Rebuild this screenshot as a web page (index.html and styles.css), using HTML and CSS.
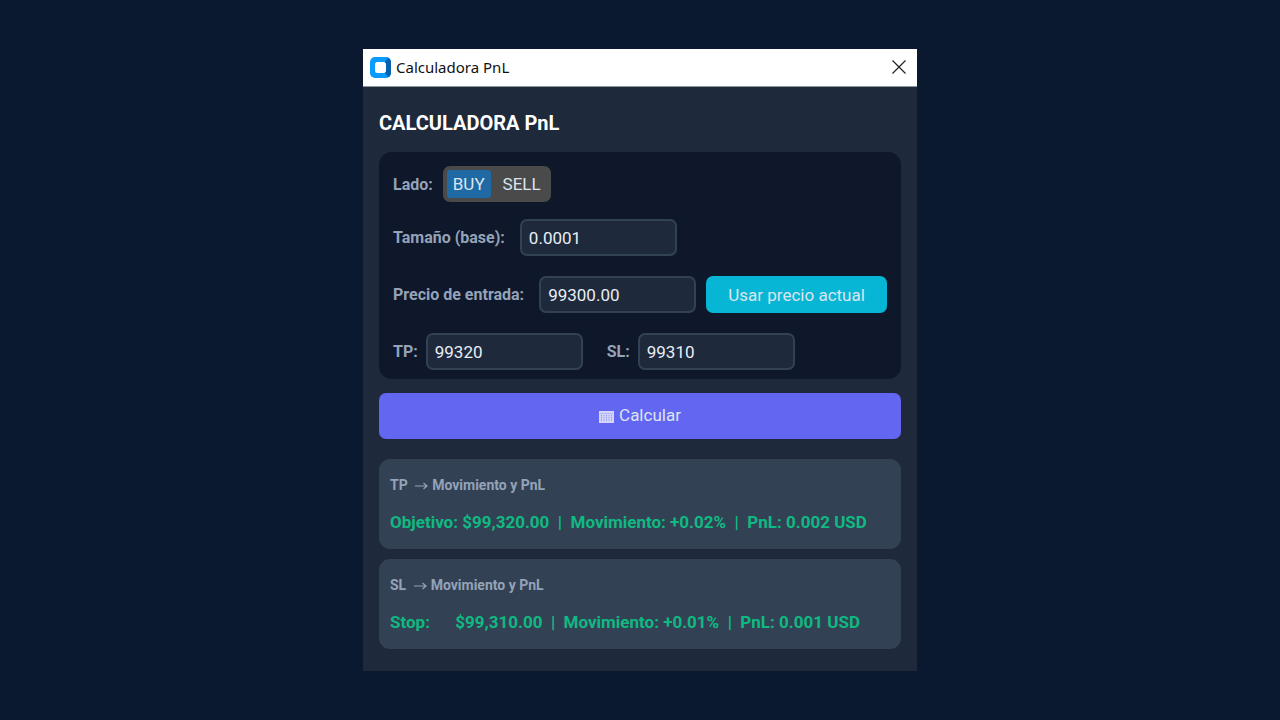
FILE: index.html
```html
<!DOCTYPE html>
<html lang="es">
<head>
    <meta charset="UTF-8">
    <title>Calculadora PnL</title>
    <link rel="stylesheet" href="styles.css">
</head>
<body>
    <div class="window">
        <div class="title-bar">
            <svg class="app-icon" viewBox="0 0 21 21">
                <rect width="21" height="21" rx="5" fill="#0a9bff"/>
                <path d="M15 5l3-4.300A5 5 0 0 1 21 5v11a5 5 0 0 1-3 4.300L15 16z" fill="#0560b0"/>
                <rect x="5" y="5" width="11" height="11" rx="2.500" fill="#fff"/>
            </svg>
            <span class="window-title">Calculadora PnL</span>
            <button class="close-button" type="button" aria-label="Cerrar">
                <svg viewBox="0 0 14 14">
                    <path d="M.5.5l13 13M13.500.5l-13 13" stroke="#222" stroke-width="1.200" fill="none"/>
                </svg>
            </button>
        </div>
        <form class="content" onsubmit="return false">
            <h1>CALCULADORA PnL</h1>
            <div class="card">
                <div class="row side-row">
                    <span class="label" id="sideLabel">Lado:</span>
                    <div class="side-switch" role="radiogroup" aria-labelledby="sideLabel">
                        <label><input type="radio" name="side" value="BUY" checked><span>BUY</span></label>
                        <label><input type="radio" name="side" value="SELL"><span>SELL</span></label>
                    </div>
                </div>
                <div class="row wide-row">
                    <label class="label" for="size">Tamaño (base):</label>
                    <input class="field" type="text" id="size" value="0.0001">
                </div>
                <div class="row wide-row">
                    <label class="label" for="entry">Precio de entrada:</label>
                    <input class="field" type="text" id="entry" value="99300.00">
                    <button class="price-button" type="button">Usar precio actual</button>
                </div>
                <div class="row">
                    <div class="pair">
                        <label class="label" for="tp">TP:</label>
                        <input class="field" type="text" id="tp" value="99320">
                    </div>
                    <div class="pair">
                        <label class="label" for="sl">SL:</label>
                        <input class="field" type="text" id="sl" value="99310">
                    </div>
                </div>
            </div>
            <button class="calc-button" type="submit">
                <svg class="calc-icon" viewBox="0 0 15 12">
                    <rect width="15" height="12" fill="#d3d6f8"/>
                    <path d="M1 2.500h13" stroke="#b4b7f6"/>
                    <path d="M2.500 4v6M5 4v6M7.500 4v6M10 4v6M12.500 4v6" stroke="#8f92f2" stroke-dasharray="1.300 .9"/>
                </svg>
                Calcular
            </button>
            <div class="results">
                <div class="result">
                    <h2>TP <svg class="arrow" viewBox="0 0 13 8"><path d="M0 4h12M8.500 1l3.500 3-3.500 3" fill="none" stroke="currentColor" stroke-width="1.200"/></svg>Movimiento y PnL</h2>
                    <p>Objetivo: $99,320.00  |  Movimiento: +0.02%  |  PnL: 0.002 USD</p>
                </div>
                <div class="result">
                    <h2>SL <svg class="arrow" viewBox="0 0 13 8"><path d="M0 4h12M8.500 1l3.500 3-3.500 3" fill="none" stroke="currentColor" stroke-width="1.200"/></svg>Movimiento y PnL</h2>
                    <p>Stop:      $99,310.00  |  Movimiento: +0.01%  |  PnL: 0.001 USD</p>
                </div>
            </div>
        </form>
    </div>
</body>
</html>
```
FILE: styles.css
```css
* {
    box-sizing: border-box;
}
body {
    font-family: Roboto, sans-serif;
    background-color: #0a192f;
    margin: 0;
    display: flex;
    justify-content: center;
    align-items: center;
    min-height: 100vh;
}
.window {
    width: 100%;
    max-width: 554px;
    background-color: #1e293b;
}
.title-bar {
    display: flex;
    align-items: center;
    background-color: #fff;
    border-bottom: 1px solid #8b959e;
    padding: 7px 11px 8px 7px;
}
.app-icon {
    width: 21px;
    height: 21px;
}
.window-title {
    flex: 1;
    margin-left: 5px;
    font-family: "Noto Sans", "Open Sans", sans-serif;
    font-size: 15px;
    line-height: 22px;
    color: #111;
}
.close-button {
    display: flex;
    background: none;
    border: none;
    padding: 0;
    cursor: pointer;
}
.close-button svg {
    width: 14px;
    height: 14px;
}
.content {
    padding: 24px 16px 22px;
}
h1 {
    margin: 0 0 17px;
    font-size: 20px;
    line-height: 24px;
    color: #fff;
}
.card {
    display: flex;
    flex-direction: column;
    gap: 20px;
    background-color: #0f172a;
    border-radius: 13px;
    padding: 14px 14px 9px;
}
.row, .pair {
    display: flex;
    align-items: center;
    gap: 10px;
}
.row .pair {
    gap: 8px;
}
.pair + .pair {
    margin-left: 14px;
}
.side-row {
    margin-bottom: -3px;
}
.label {
    font-size: 16px;
    font-weight: bold;
    color: #94a3b8;
}
.wide-row .label {
    margin-right: 5px;
}
.side-switch {
    display: flex;
    background-color: #4a4a4a;
    border-radius: 7px;
    padding: 4px;
}
.side-switch input {
    position: absolute;
    opacity: 0;
    margin: 0;
}
.side-switch span {
    display: block;
    padding: 0 6px;
    border-radius: 3px;
    font-size: 17px;
    line-height: 28px;
    color: #dce4ee;
}
.side-switch label + label {
    margin-left: 6px;
}
.side-switch input:checked + span {
    background-color: #1f6aa5;
}
.field {
    width: 157px;
    height: 37px;
    background-color: #1e293b;
    border: 2px solid #334155;
    border-radius: 7px;
    padding: 0 7px;
    font-family: inherit;
    font-size: 17px;
    color: #e8eef5;
}
.price-button {
    flex: 1;
    height: 37px;
    background-color: #06b6d4;
    border: none;
    border-radius: 7px;
    font-family: inherit;
    font-size: 17px;
    color: #dce4ee;
    cursor: pointer;
}
.calc-button {
    display: flex;
    justify-content: center;
    align-items: center;
    gap: 5px;
    width: 100%;
    height: 46px;
    margin: 14px 0 20px;
    padding: 0 0 2px;
    background-color: #6366f1;
    border: none;
    border-radius: 7px;
    font-family: inherit;
    font-size: 17px;
    color: #dce4ee;
    cursor: pointer;
}
.calc-icon {
    width: 15px;
    height: 12px;
    margin-top: 4px;
}
.results {
    display: flex;
    flex-direction: column;
    gap: 10px;
}
.result {
    background-color: #334155;
    border-radius: 11px;
    padding: 17px 11px 15px;
}
.result h2 {
    margin: 0 0 16px;
    font-size: 14px;
    line-height: 18px;
    color: #94a3b8;
}
.arrow {
    width: 13px;
    height: 8px;
    margin: 0 4px;
}
.result p {
    margin: 0;
    font-size: 17px;
    line-height: 24px;
    font-weight: bold;
    color: #10b981;
    white-space: pre-wrap;
}
```
